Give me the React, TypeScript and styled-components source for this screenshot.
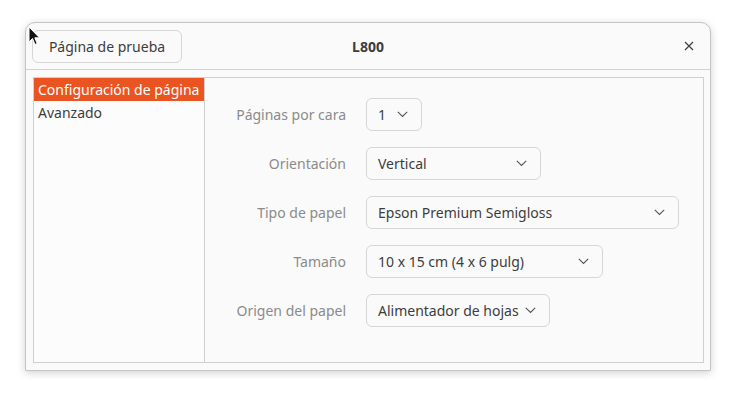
import React, { FC } from 'react';
import styled, { createGlobalStyle } from 'styled-components';

const GlobalStyle = createGlobalStyle`
  html, body {
    margin: 0;
    padding: 0;
    background: #ffffff;
  }
  body {
    font-family: "Noto Sans", "DejaVu Sans", sans-serif;
    font-size: 14px;
    color: #3d3d3d;
  }
`;

const Screen = styled.div`
  position: relative;
  width: 737px;
  height: 400px;
  padding: 22px 0 0 25px;
  box-sizing: border-box;
`;

const Window = styled.div`
  width: 686px;
  height: 349px;
  box-sizing: border-box;
  border: 1px solid #c4c4c4;
  border-radius: 10px 10px 0 0;
  background: #fafafa;
  box-shadow: 0 2px 8px rgba(0, 0, 0, 0.18);
  display: flex;
  flex-direction: column;
`;

const HeaderBar = styled.div`
  height: 47px;
  box-sizing: border-box;
  border-bottom: 1px solid #d2d2d2;
  display: grid;
  grid-template-columns: 1fr auto 1fr;
  align-items: center;
  padding: 0 6px;
`;

const Button = styled.button`
  justify-self: start;
  width: 150px;
  height: 33px;
  border: 1px solid #d6d6d6;
  border-radius: 6px;
  background: #fafafa;
  font: inherit;
  color: #3d3d3d;
  padding: 0;
`;

const Title = styled.div`
  font-weight: 700;
  color: #3d3d3d;
`;

const CloseButton = styled.div`
  justify-self: end;
  width: 14px;
  height: 14px;
  margin-right: 8px;
  display: flex;
  align-items: center;
  justify-content: center;
`;

const Body = styled.div`
  flex: 1;
  padding: 7px 6px 7px 7px;
  display: flex;
`;

const Frame = styled.div`
  flex: 1;
  border: 1px solid #d0d0d0;
  display: flex;
`;

const Sidebar = styled.div`
  width: 170px;
  border-right: 1px solid #d0d0d0;
  background: #fcfcfc;
  display: flex;
  flex-direction: column;
`;

const SideItem = styled.div<{ $active?: boolean }>`
  height: 23px;
  line-height: 23px;
  padding-left: 4px;
  white-space: nowrap;
  background: ${(p) => (p.$active ? '#e95420' : 'transparent')};
  color: ${(p) => (p.$active ? '#ffffff' : '#3d3d3d')};
`;

const Settings = styled.div`
  flex: 1;
  padding-top: 20px;
  display: grid;
  grid-template-columns: 141px auto;
  grid-auto-rows: 33px;
  column-gap: 20px;
  row-gap: 16px;
  align-content: start;
  justify-content: start;
`;

const Label = styled.div`
  color: #8b8b8b;
  text-align: right;
  align-self: center;
  white-space: nowrap;
`;

const Dropdown = styled.div<{ $width: number }>`
  width: ${(p) => p.$width}px;
  height: 33px;
  box-sizing: border-box;
  border: 1px solid #d6d6d6;
  border-radius: 6px;
  display: flex;
  align-items: center;
  justify-content: space-between;
  padding: 0 13px 0 11px;
  color: #3d3d3d;
  white-space: nowrap;
`;

const Cursor = styled.svg`
  position: absolute;
  left: 28px;
  top: 26px;
`;

const Chevron: FC = () => (
  <svg width="11" height="7" viewBox="0 0 11 7">
    <path d="M0.8 0.8 L5.5 5.5 L10.2 0.8" fill="none" stroke="#555" strokeWidth="1.1" />
  </svg>
);

const rows = [
  { label: 'Páginas por cara', value: '1', width: 56 },
  { label: 'Orientación', value: 'Vertical', width: 175 },
  { label: 'Tipo de papel', value: 'Epson Premium Semigloss', width: 313 },
  { label: 'Tamaño', value: '10 x 15 cm (4 x 6 pulg)', width: 237 },
  { label: 'Origen del papel', value: 'Alimentador de hojas', width: 184 },
];

const App: FC = () => {
  return (
    <Screen>
      <GlobalStyle />
      <Window>
        <HeaderBar>
          <Button>Página de prueba</Button>
          <Title>L800</Title>
          <CloseButton>
            <svg width="10" height="10" viewBox="0 0 10 10">
              <path d="M1 1 L9 9 M9 1 L1 9" stroke="#3d3d3d" strokeWidth="1.2" />
            </svg>
          </CloseButton>
        </HeaderBar>
        <Body>
          <Frame>
            <Sidebar>
              <SideItem $active>Configuración de página</SideItem>
              <SideItem>Avanzado</SideItem>
            </Sidebar>
            <Settings>
              {rows.map((r) => (
                <React.Fragment key={r.label}>
                  <Label>{r.label}</Label>
                  <Dropdown $width={r.width}>
                    <span>{r.value}</span>
                    <Chevron />
                  </Dropdown>
                </React.Fragment>
              ))}
            </Settings>
          </Frame>
        </Body>
      </Window>
      <Cursor width="14" height="21" viewBox="0 0 14 21">
        <path d="M1 1 L1 16 L4.5 12.5 L7 18.5 L9.2 17.5 L6.8 11.8 L11.5 11.8 Z" fill="#111" stroke="#fff" strokeWidth="1" strokeLinejoin="round" />
      </Cursor>
    </Screen>
  );
};

export default App;
